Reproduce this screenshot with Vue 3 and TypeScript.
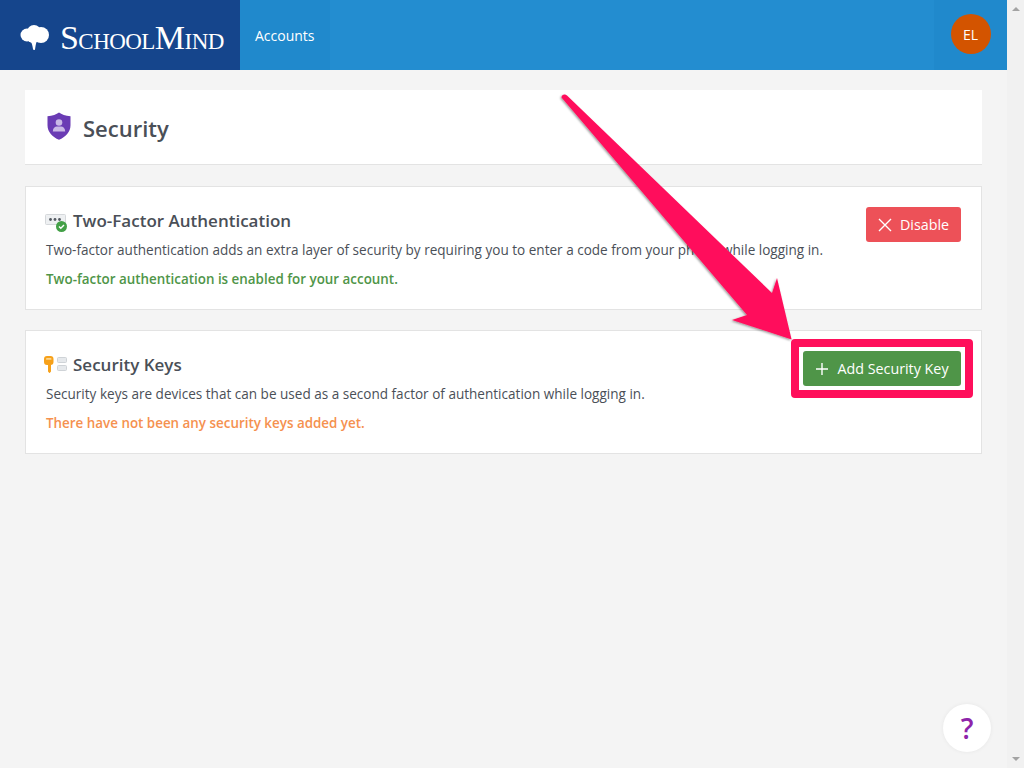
<template>
  <div class="screen">
    <div class="page">
      <header class="topbar">
        <div class="brand">
          <svg class="brain" width="29" height="25" viewBox="0 0 29 25" fill="#fff">
            <circle cx="7" cy="10" r="6.500" />
            <circle cx="14" cy="7" r="7" />
            <circle cx="21" cy="10" r="8" />
            <circle cx="13" cy="12" r="6" />
            <path d="M10 15L17 16C15.500 19 15.500 22 15 24.500 14.500 25.500 13.500 25.200 13 24 12.500 21 12 18 10 15Z" />
          </svg>
          <span class="wordmark"><span class="big">S</span>CHOOL<span class="big">M</span>IND</span>
        </div>
        <nav class="nav">
          <a class="tab">Accounts</a>
          <div class="user-slot"><span class="avatar">EL</span></div>
        </nav>
      </header>

      <main class="content">
        <section class="title-card">
          <svg width="24" height="28" viewBox="0 0 24 28">
            <path d="M12 .5C14.500 2.500 18.500 3.800 23.500 4.200v9C23.500 20 18.500 25 12 27.800 5.500 25 .5 20 .5 13.200v-9C5.500 3.800 9.500 2.500 12 .5Z" fill="#6a3bb4" />
            <circle cx="12" cy="10.500" r="3.300" fill="#c9b8e6" />
            <path d="M5.800 19.500c0-3.200 2.200-5 4-5h4.400c1.800 0 4 1.800 4 5Z" fill="#c9b8e6" />
          </svg>
          <h1>Security</h1>
        </section>

        <section v-for="item in sections" :key="item.title" class="card">
          <div class="card-text">
            <h2>
              <svg v-if="item.icon === 'otp'" width="24" height="20" viewBox="0 0 24 20">
                <rect x="1.500" y="3.500" width="20" height="10" rx="1" fill="#eef0f2" stroke="#d5d8db" />
                <circle cx="6.500" cy="8.500" r="1.400" fill="#555a62" />
                <circle cx="11" cy="8.500" r="1.400" fill="#555a62" />
                <circle cx="15.500" cy="8.500" r="1.400" fill="#555a62" />
                <circle cx="17.500" cy="15.500" r="5.500" fill="#43a047" />
                <path d="M15 15.500l1.800 1.800 3.200-3.300" fill="none" stroke="#fff" stroke-width="1.400" />
              </svg>
              <svg v-else width="24" height="20" viewBox="0 -1 24 20">
                <path d="M3 0h3.500C8.500 0 9.500 1 9.500 3v3c0 2-1 3-3 3H7v6.500L5.700 17H5.300L4 15.500V9H3C1 9 0 8 0 6V3C0 1 1 0 3 0Z" fill="#f7a11a" />
                <rect x="2" y="2" width="5.500" height="1.800" rx=".9" fill="#fcd690" />
                <rect x="13.500" y="1.500" width="9" height="5" rx="1" fill="#e6e9ec" stroke="#cfd3d7" />
                <rect x="13.500" y="9.500" width="9" height="5" rx="1" fill="#e6e9ec" stroke="#cfd3d7" />
              </svg>
              {{ item.title }}
            </h2>
            <p class="desc">{{ item.description }}</p>
            <p class="status" :class="item.statusClass">{{ item.status }}</p>
          </div>
          <button class="btn" :class="item.buttonClass">
            <svg width="14" height="14" viewBox="0 0 14 14">
              <path :d="item.buttonIcon" stroke="#fff" stroke-width="1.400" fill="none" />
            </svg>
            {{ item.button }}
          </button>
        </section>
      </main>

      <button class="help">?</button>

      <!-- callout drawn on top of the screenshot -->
      <svg class="arrow" width="1024" height="768" viewBox="0 0 1024 768">
        <defs>
          <filter id="soft" x="-10%" y="-10%" width="120%" height="120%">
            <feDropShadow dx="-1" dy="1" stdDeviation="1" flood-color="#000" flood-opacity=".4" />
          </filter>
        </defs>
        <path d="M561.500 97.500C561.500 94.500 565 93.500 567 95.500L772 293 777 278 791.600 339.500 732 320 747 315 561.500 97.500Z" fill="#ff0f5b" filter="url(#soft)" />
      </svg>
      <div class="callout"></div>
    </div>

    <div class="scrollbar">
      <span class="up"></span>
      <span class="down"></span>
    </div>
  </div>
</template>

<script setup lang="ts">
interface SecuritySection {
  title: string
  icon: 'otp' | 'key'
  description: string
  status: string
  statusClass: string
  button: string
  buttonClass: string
  buttonIcon: string
}

const sections: SecuritySection[] = [
  {
    title: 'Two-Factor Authentication',
    icon: 'otp',
    description:
      'Two-factor authentication adds an extra layer of security by requiring you to enter a code from your phone while logging in.',
    status: 'Two-factor authentication is enabled for your account.',
    statusClass: 'ok',
    button: 'Disable',
    buttonClass: 'danger',
    buttonIcon: 'M1 1l12 12M13 1L1 13',
  },
  {
    title: 'Security Keys',
    icon: 'key',
    description:
      'Security keys are devices that can be used as a second factor of authentication while logging in.',
    status: 'There have not been any security keys added yet.',
    statusClass: 'warn',
    button: 'Add Security Key',
    buttonClass: 'success',
    buttonIcon: 'M7 1v12M1 7h12',
  },
]
</script>

<style>
html,
body {
  margin: 0;
  overflow: hidden;
}
</style>

<style scoped>
.screen {
  display: flex;
  width: 1024px;
  height: 768px;
  overflow: hidden;
  font-family: "Open Sans", "Noto Sans", sans-serif;
  background: #f4f4f4;
}

.page {
  position: relative;
  flex: 1;
  min-width: 0;
}

.topbar {
  display: flex;
  height: 70px;
}

.brand {
  display: flex;
  align-items: center;
  gap: 11px;
  width: 240px;
  padding-left: 20px;
  box-sizing: border-box;
  background: #15458c;
}

.brain {
  margin-top: 5px;
}

.wordmark {
  font-family: "Liberation Serif", serif;
  font-size: 23px;
  letter-spacing: -0.55px;
  color: #fff;
  margin-top: 5px;
  white-space: nowrap;
}

.wordmark .big {
  font-size: 34px;
}

.nav {
  flex: 1;
  display: flex;
  justify-content: space-between;
  background: #238dd0;
}

.tab {
  display: flex;
  align-items: center;
  padding: 0 15px;
  font-size: 14px;
  color: #fff;
  background: #2089cc;
}

.user-slot {
  display: flex;
  align-items: center;
  justify-content: center;
  width: 73px;
  background: #2089cc;
}

.avatar {
  display: flex;
  align-items: center;
  justify-content: center;
  width: 40px;
  height: 40px;
  margin-top: -2px;
  border-radius: 50%;
  background: #d35400;
  color: #fff;
  font-size: 14px;
}

.content {
  display: flex;
  flex-direction: column;
  padding: 20px 25px;
}

.title-card {
  display: flex;
  align-items: center;
  gap: 12px;
  height: 75px;
  box-sizing: border-box;
  padding: 2px 22px 0;
  margin-bottom: 21px;
  background: #fff;
  border-bottom: 1px solid #e3e3e3;
}

.title-card svg {
  margin-top: -4px;
}

h1 {
  margin: 0;
  font-size: 22px;
  font-weight: 600;
  color: #4a4f57;
}

.card {
  display: flex;
  justify-content: space-between;
  align-items: flex-start;
  height: 124px;
  box-sizing: border-box;
  padding: 20px 20px 0;
  margin-bottom: 20px;
  background: #fff;
  border: 1px solid #e3e3e3;
}

h2 {
  display: flex;
  align-items: center;
  gap: 5px;
  margin: 2px 0 9px -2px;
  font-size: 17px;
  font-weight: 600;
  color: #4a4f57;
}

h2 svg {
  overflow: visible;
}

.desc {
  margin: 0 0 10px;
  font-size: 13.55px;
  line-height: 19px;
  color: #4a4f57;
}

.status {
  margin: 0;
  font-size: 13.4px;
  line-height: 19px;
  font-weight: 600;
}

.ok {
  color: #4f9548;
}

.warn {
  color: #f5914f;
}

.btn {
  display: flex;
  align-items: center;
  justify-content: center;
  gap: 8px;
  height: 35px;
  border: 0;
  border-radius: 3px;
  color: #fff;
  font-family: inherit;
  font-size: 14.3px;
  flex: none;
}

.danger {
  width: 95px;
  background: #ed5158;
}

.success {
  width: 158px;
  background: #4f9548;
}

.help {
  position: absolute;
  left: 943px;
  top: 704px;
  width: 48px;
  height: 48px;
  border: 0;
  border-radius: 50%;
  background: #fff;
  color: #8e24aa;
  font-family: inherit;
  font-size: 28px;
  font-weight: 600;
  box-shadow: 0 0 4px rgba(0, 0, 0, 0.06);
}

.arrow {
  position: absolute;
  left: 0;
  top: 0;
  pointer-events: none;
}

.callout {
  position: absolute;
  left: 791px;
  top: 339px;
  width: 182px;
  height: 59px;
  box-sizing: border-box;
  border: 8px solid #ff0f5b;
  border-radius: 4px;
}

.scrollbar {
  display: flex;
  flex-direction: column;
  justify-content: space-between;
  align-items: center;
  flex: none;
  width: 17px;
  padding: 7px 0;
  box-sizing: border-box;
  background: #f1f1f1;
}

.up,
.down {
  width: 0;
  height: 0;
  border-left: 4px solid transparent;
  border-right: 4px solid transparent;
}

.up {
  border-bottom: 4px solid #a3a3a3;
}

.down {
  border-top: 4px solid #a3a3a3;
}
</style>
